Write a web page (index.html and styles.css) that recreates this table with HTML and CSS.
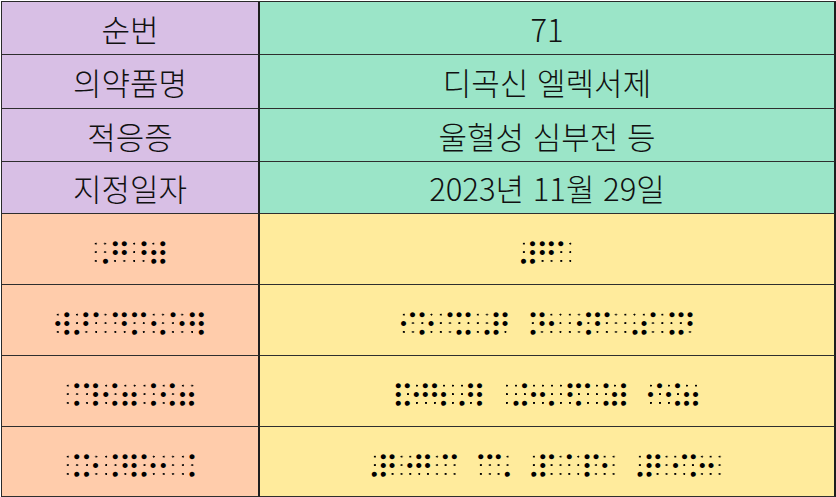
FILE: index.html
```html
<!DOCTYPE html>
<html lang="ko">
<head>
<meta charset="utf-8">
<title>점자 의약품 정보</title>
<link rel="stylesheet" href="styles.css">
</head>
<body>
<div class="sheet">
  <div class="cell label">순번</div>
  <div class="cell value">71</div>
  <div class="cell label">의약품명</div>
  <div class="cell value">디곡신 엘렉서제</div>
  <div class="cell label">적응증</div>
  <div class="cell value">울혈성 심부전 등</div>
  <div class="cell label">지정일자</div>
  <div class="cell value">2023년 11월 29일</div>

  <div class="cell blabel"><div class="br pl"><span class="w">⠠⠛⠘⠾</span></div></div>
  <div class="cell bvalue"><div class="br p5"><span class="w">⠼⠛⠁</span></div></div>
  <div class="cell blabel"><div class="br pl"><span class="w">⠺⠜⠁⠙⠍⠢⠑⠻</span></div></div>
  <div class="cell bvalue"><div class="br p6"><span class="w">⠊⠕⠈⠭⠠⠟</span>⠀<span class="w">⠝⠂⠐⠝⠁⠠⠎⠨⠝</span></div></div>
  <div class="cell blabel"><div class="br pl"><span class="w">⠨⠹⠪⠶⠨⠪⠶</span></div></div>
  <div class="cell bvalue"><div class="br p7"><span class="w">⠯⠚⠳⠠⠻</span>⠀<span class="w">⠠⠕⠢⠘⠍⠨⠾</span>⠀<span class="w">⠊⠪⠶</span></div></div>
  <div class="cell blabel"><div class="br pl"><span class="w">⠨⠕⠨⠻⠕⠂⠨</span></div></div>
  <div class="cell bvalue"><div class="br p8"><span class="w">⠼⠃⠚⠃⠉</span>⠀<span class="w">⠉⠡</span>⠀<span class="w">⠼⠁⠁⠏⠂</span>⠀<span class="w">⠼⠃⠊⠕⠂</span></div></div>
</div>
</body>
</html>
```
FILE: styles.css
```css
html, body {
  margin: 0;
  padding: 0;
  background: #ffffff;
}

.sheet {
  display: grid;
  grid-template-columns: 258px 576px;
  grid-template-rows: 53px 54px 53px 52px 71px 71px 71px 70px;
  width: max-content;
  margin: 1px 0 0 1px;
  border-top: 1px solid #2a2a2a;
  border-left: 1px solid #2a2a2a;
}

.cell {
  box-sizing: border-box;
  display: flex;
  align-items: center;
  justify-content: center;
  border-right: 2px solid #1e1e1e;
  border-bottom: 1px solid #2e2e2e;
  overflow: hidden;
}

.label,
.value {
  font-family: "Noto Sans CJK KR", "Noto Sans", sans-serif;
  font-weight: 300;
  font-size: 31px;
  line-height: 1;
  color: #111111;
}

.label { background: #d8bfe5; }
.value { background: #9be5c8; }
.blabel { background: #ffccab; padding-top: 12px; }
.bvalue { background: #ffeb9c; padding-top: 12px; }

.br {
  --p: 18.5px;
  font-family: "DejaVu Serif", serif;
  font-size: 31.43px;
  line-height: 36px;
  letter-spacing: calc(var(--p) - 23px);
  white-space: nowrap;
  color: #000000;
  margin-right: 4.5px;
}

.pl { --p: 19.2px; }
.p5 { --p: 18.7px; }
.p6 { --p: 18.5px; }
.p7 { --p: 18px; }
.p8 { --p: 17.7px; }

.w {
  background-image:
    radial-gradient(circle at 6.9px 6.6px, #000 0.7px, rgba(0,0,0,0) 1.3px),
    radial-gradient(circle at 6.9px 15.1px, #000 0.7px, rgba(0,0,0,0) 1.3px),
    radial-gradient(circle at 6.9px 23.9px, #000 0.7px, rgba(0,0,0,0) 1.3px),
    radial-gradient(circle at 16px 6.6px, #000 0.7px, rgba(0,0,0,0) 1.3px),
    radial-gradient(circle at 16px 15.1px, #000 0.7px, rgba(0,0,0,0) 1.3px),
    radial-gradient(circle at 16px 23.9px, #000 0.7px, rgba(0,0,0,0) 1.3px);
  background-size: var(--p) 100%;
  background-repeat: repeat-x;
}
```
